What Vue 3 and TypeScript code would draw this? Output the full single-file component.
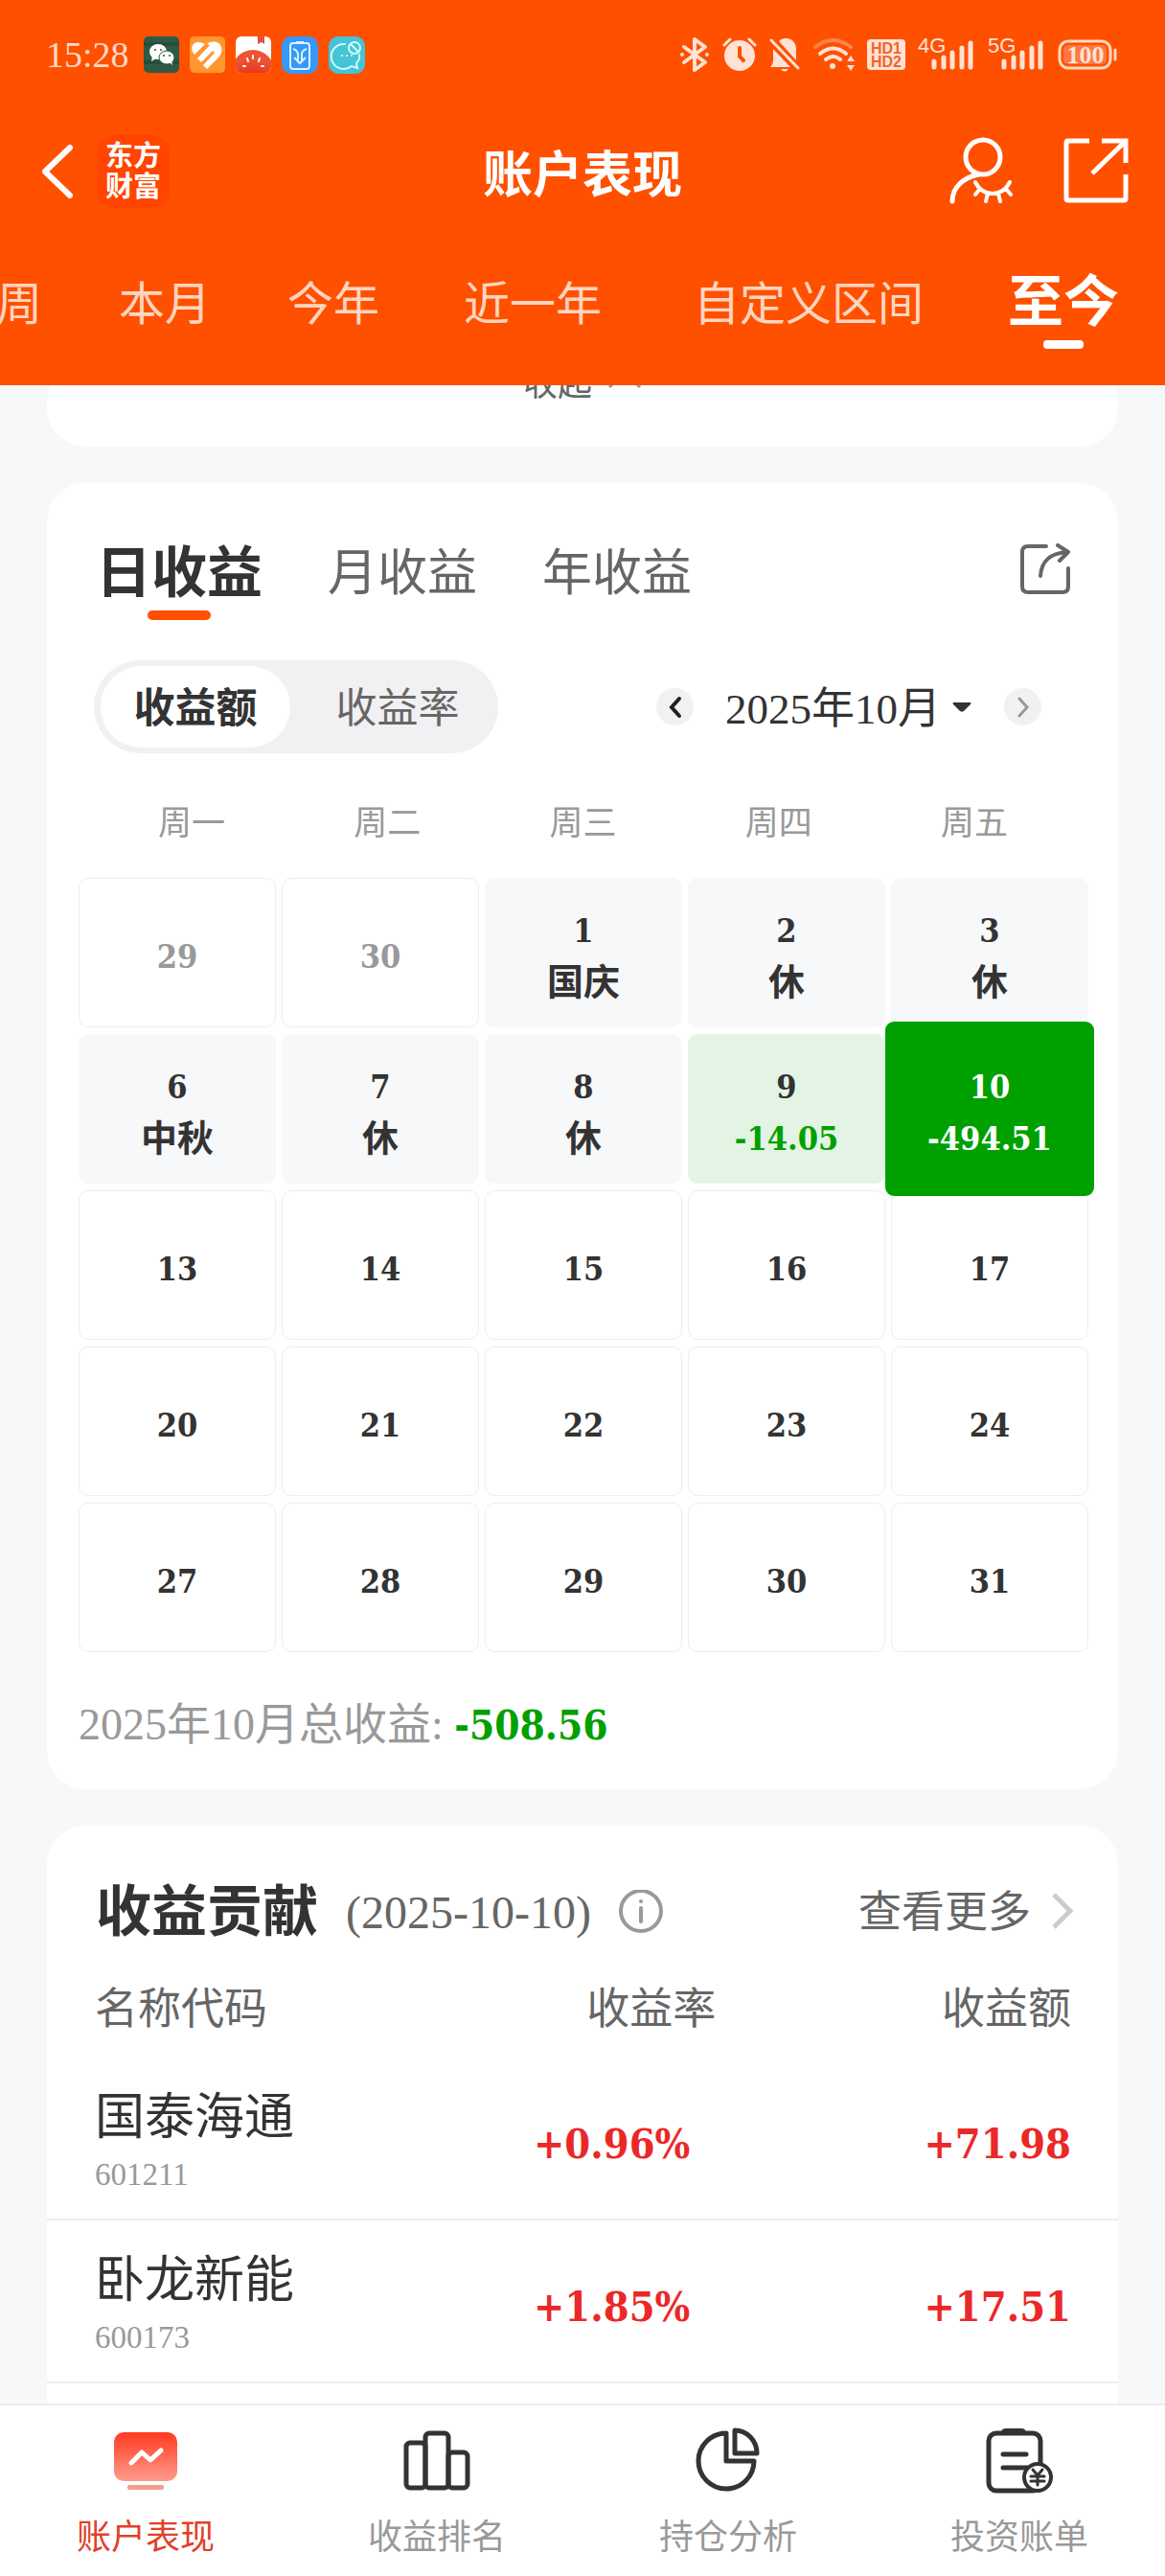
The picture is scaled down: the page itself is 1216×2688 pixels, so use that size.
<script setup lang="ts">
import { ref } from 'vue'

interface Range { label: string; wide?: boolean }
interface Day { id: number; day: number; note?: string; tone?: 'muted' | 'rest' | 'loss' | 'active' }
interface Holding { name: string; code: string; rate: string; amount: string }

const ranges: Range[] = [
  { label: '周' },
  { label: '本月' },
  { label: '今年' },
  { label: '近一年', wide: true },
  { label: '自定义区间', wide: true },
  { label: '至今' },
]
const activeRange = ref('至今')

const periods = ['日收益', '月收益', '年收益']
const activePeriod = ref('日收益')

const modes = ['收益额', '收益率']
const activeMode = ref('收益额')

const month = ref('2025年10月')
const weekdays = ['周一', '周二', '周三', '周四', '周五']

const special: Record<number, Pick<Day, 'note' | 'tone'>> = {
  1: { note: '国庆', tone: 'rest' },
  2: { note: '休', tone: 'rest' },
  3: { note: '休', tone: 'rest' },
  6: { note: '中秋', tone: 'rest' },
  7: { note: '休', tone: 'rest' },
  8: { note: '休', tone: 'rest' },
  9: { note: '-14.05', tone: 'loss' },
  10: { note: '-494.51', tone: 'active' },
}
const monthDays = [1, 2, 3, 6, 7, 8, 9, 10, 13, 14, 15, 16, 17, 20, 21, 22, 23, 24, 27, 28, 29, 30, 31]
const days: Day[] = [
  { id: -2, day: 29, tone: 'muted' },
  { id: -1, day: 30, tone: 'muted' },
  ...monthDays.map((d) => ({ id: d, day: d, ...special[d] })),
]

const holdings: Holding[] = [
  { name: '国泰海通', code: '601211', rate: '+0.96%', amount: '+71.98' },
  { name: '卧龙新能', code: '600173', rate: '+1.85%', amount: '+17.51' },
]

const isNumeric = (note: string) => note.startsWith('-') || note.startsWith('+')
</script>

<template>
  <div class="page">
    <header class="top">
      <div class="status">
        <div class="status-left">
          <span class="clock">15:28</span>
          <svg width="37" height="38" viewBox="0 0 37 38">
            <rect width="37" height="38" rx="5" fill="#2f5a45" />
            <path d="M0 8h37M0 27h37" stroke="#274c3b" stroke-width="4" />
            <ellipse cx="15" cy="16" rx="9" ry="8" fill="#fff" />
            <path d="M9 21l-1 5 5-3z" fill="#fff" />
            <ellipse cx="24" cy="22" rx="8" ry="7" fill="#fff" stroke="#2f5a45" stroke-width="1" />
            <path d="M27 27l3 3-1-5z" fill="#fff" />
            <circle cx="12" cy="14" r="1" fill="#2f5a45" /><circle cx="18" cy="14" r="1" fill="#2f5a45" />
            <circle cx="21" cy="20" r="1" fill="#2f5a45" /><circle cx="27" cy="20" r="1" fill="#2f5a45" />
          </svg>
          <svg width="37" height="38" viewBox="0 0 37 38">
            <rect width="37" height="38" rx="5" fill="#ff9630" />
            <path d="M18 8c5-4 13-3 15 3 1 4 0 8-3 11L18 34l-4-4 12-13-2-2L12 27l-4-4 13-14z" fill="#fff" />
            <path d="M16 8L5 19C0 13 2 6 9 6c3 0 5 1 7 2z" fill="#fff" />
            <path d="M19 9L8 21" stroke="#ff9630" stroke-width="2" />
          </svg>
          <svg width="37" height="38" viewBox="0 0 37 38">
            <defs>
              <radialGradient id="melon" cx="50%" cy="100%" r="80%">
                <stop offset="0" stop-color="#d41208" /><stop offset="1" stop-color="#ee5434" />
              </radialGradient>
              <clipPath id="melon-clip"><rect width="37" height="38" rx="6" /></clipPath>
            </defs>
            <g clip-path="url(#melon-clip)">
              <rect width="37" height="38" fill="#fff" />
              <path d="M23 0h7v8l-3-2-4 2z" fill="#e65038" />
              <circle cx="18" cy="36" r="22" fill="url(#melon)" />
              <path d="M18 20v3M12 23l1 3M25 23l-1 3M8 31l2 0M29 31l-2 0" stroke="#fff" stroke-width="2" stroke-linecap="round" />
            </g>
          </svg>
          <svg width="38" height="39" viewBox="0 0 38 39">
            <rect width="38" height="39" rx="10" fill="#3797fa" />
            <rect x="9" y="7" width="20" height="27" rx="3" fill="none" stroke="#d8f4ff" stroke-width="2" />
            <path d="M15 6h8M12 13q6 2 5 8v6M26 13q-6 2-5 8v6M13 22l6 6 6-6" fill="none" stroke="#d8f4ff" stroke-width="2" />
          </svg>
          <svg width="38" height="39" viewBox="0 0 38 39">
            <rect width="38" height="39" rx="10" fill="#45c4d4" />
            <path d="M17 8A13 13 0 1 0 24 31l6 2-1-5q4-4 3-9" fill="none" stroke="#cdfcff" stroke-width="2" stroke-linecap="round" />
            <circle cx="27" cy="12" r="6" fill="none" stroke="#cdfcff" stroke-width="2" />
            <path d="M23 8l8 8" stroke="#cdfcff" stroke-width="2" />
            <circle cx="14" cy="20" r="1" fill="#fff" /><circle cx="19" cy="20" r="1" fill="#fff" /><circle cx="24" cy="20" r="1" fill="#fff" />
          </svg>
        </div>
        <div class="status-right">
          <svg width="32" height="40" viewBox="0 0 32 40">
            <path d="M5 12l22 16-11 8V4l11 8L5 28" fill="none" stroke="#ffe2d4" stroke-width="4" stroke-linejoin="round" stroke-linecap="round" />
            <circle cx="3" cy="20" r="2" fill="#ffe2d4" /><circle cx="29" cy="20" r="2" fill="#ffe2d4" />
          </svg>
          <svg width="36" height="40" viewBox="0 0 36 40">
            <circle cx="18" cy="21" r="16" fill="#ffe2d4" />
            <path d="M2 10l6-6M34 10l-6-6" stroke="#ffe2d4" stroke-width="3" stroke-linecap="round" />
            <path d="M18 13v9l4 4" fill="none" stroke="#ff5000" stroke-width="4" stroke-linecap="round" />
          </svg>
          <svg width="32" height="40" viewBox="0 0 32 40">
            <path d="M11 5c8-5 17 0 17 9v12L10 6zM4 14l18 19H1c3-3 3-6 3-10zM12 35h8q-4 5-8 0z" fill="#ffe2d4" />
            <path d="M2 5l28 29" stroke="#ffe2d4" stroke-width="3" stroke-linecap="round" />
          </svg>
          <svg width="44" height="40" viewBox="0 0 44 40">
            <g fill="none" stroke="#ffe2d4" stroke-width="4" stroke-linecap="round">
              <path d="M3 12q18-14 37 0" opacity="0.35" /><path d="M8 19q14-11 27 0" /><path d="M14 25q8-6 15 0" />
            </g>
            <circle cx="21" cy="32" r="3" fill="#ffe2d4" />
            <path d="M40 21l4 6h-8zM40 37l4-6h-8z" fill="#ffe2d4" />
          </svg>
          <svg width="40" height="40" viewBox="0 0 40 40">
            <rect y="4" width="40" height="32" rx="4" fill="#ffe2d4" />
            <text x="20" y="19" class="glyph hd">HD1</text>
            <text x="20" y="33" class="glyph hd">HD2</text>
          </svg>
          <svg v-for="net in ['4G', '5G']" :key="net" width="60" height="40" viewBox="0 0 60 40">
            <text x="0" y="18" class="net">{{ net }}</text>
            <path d="M17 33v-6M27 33V23M36 33V18M46 33V13M55 33V8" stroke="#ffe2d4" stroke-width="5" stroke-linecap="round" />
          </svg>
          <svg width="62" height="40" viewBox="0 0 62 40">
            <rect x="2" y="6" width="53" height="28" rx="9" fill="none" stroke="#ffd9bd" stroke-width="3" />
            <rect x="6" y="10" width="45" height="20" rx="5" fill="#ff7840" />
            <path d="M60 15v10" stroke="#ffd9bd" stroke-width="3" stroke-linecap="round" />
            <text x="29" y="29" class="glyph level">100</text>
          </svg>
        </div>
      </div>

      <div class="title-bar">
        <div class="side">
          <button class="icon-btn" aria-label="返回">
            <svg width="40" height="64" viewBox="0 0 40 64">
              <path d="M36 7L10 32l26 25" fill="none" stroke="#fff" stroke-width="6" stroke-linejoin="round" stroke-linecap="round" />
            </svg>
          </button>
          <a href="#" class="brand"><span>东方</span><span>财富</span></a>
        </div>
        <h1>账户表现</h1>
        <div class="side end">
          <button class="icon-btn" aria-label="隐私">
            <svg width="70" height="72" viewBox="0 0 70 72">
              <g fill="none" stroke="#fff" stroke-width="5" stroke-linecap="round">
                <circle cx="35" cy="21" r="18" />
                <path d="M31 39C15 42 3 52 3 67" />
                <path d="M27 47q6 12 18 12t18-12M32 54l-5 6M40 59l-2 8M51 59l2 8M59 54l5 6" stroke-width="4" />
              </g>
            </svg>
          </button>
          <button class="icon-btn" aria-label="分享">
            <svg width="70" height="72" viewBox="0 0 70 72">
              <path d="M28 4H6Q4 4 4 6V64q0 2 2 2H64q2 0 2-2V39M41 4H66V27M31 38L65 5" fill="none" stroke="#fff" stroke-width="5" />
            </svg>
          </button>
        </div>
      </div>

      <nav class="ranges">
        <button
          v-for="r in ranges" :key="r.label"
          :class="{ wide: r.wide, on: r.label === activeRange }"
          @click="activeRange = r.label"
        >{{ r.label }}</button>
      </nav>
    </header>

    <main class="content">
      <section class="card summary">
        <button class="collapse">
          收起
          <svg width="36" height="20" viewBox="0 0 36 20"><path d="M2 18L18 3l16 15" fill="none" stroke="#999" stroke-width="3" /></svg>
        </button>
      </section>

      <section class="card calendar-card">
        <div class="row">
          <div class="periods">
            <button v-for="p in periods" :key="p" :class="{ on: p === activePeriod }" @click="activePeriod = p">{{ p }}</button>
          </div>
          <button class="icon-btn share" aria-label="分享日历">
            <svg width="58" height="56" viewBox="0 0 58 56">
              <path d="M31 3H12q-6 0-6 6V45q0 6 6 6H48q6 0 6-6V26M25 34C26 18 35 10 54 9M43 2l11 7-9 9" fill="none" stroke="#666" stroke-width="4" stroke-linecap="round" stroke-linejoin="round" />
            </svg>
          </button>
        </div>

        <div class="row controls">
          <div class="modes">
            <button v-for="m in modes" :key="m" :class="{ on: m === activeMode }" @click="activeMode = m">{{ m }}</button>
          </div>
          <div class="month-nav">
            <button class="round" aria-label="上个月">
              <svg width="14" height="24" viewBox="0 0 14 24"><path d="M11 3L3 12l8 9" fill="none" stroke="#222" stroke-width="4" stroke-linecap="round" /></svg>
            </button>
            <label class="month">
              <select v-model="month" aria-label="月份"><option>2025年10月</option></select>
              <svg width="22" height="12" viewBox="0 0 22 12"><path d="M2 1h18q1 1 0 2l-7 7q-2 1-4 0L2 3q-1-1 0-2z" fill="#333" /></svg>
            </label>
            <button class="round" aria-label="下个月">
              <svg width="14" height="24" viewBox="0 0 14 24"><path d="M3 3l8 9-8 9" fill="none" stroke="#999" stroke-width="3" stroke-linecap="round" /></svg>
            </button>
          </div>
        </div>

        <div class="weekdays"><span v-for="w in weekdays" :key="w">{{ w }}</span></div>
        <div class="days">
          <button v-for="d in days" :key="d.id" class="day" :class="d.tone">
            <span class="num">{{ d.day }}</span>
            <span v-if="d.note" class="note" :class="{ num: isNumeric(d.note) }">{{ d.note }}</span>
          </button>
        </div>

        <p class="total">2025年10月总收益: <strong>-508.56</strong></p>
      </section>

      <section class="card contribution">
        <div class="row head">
          <div class="heading">
            <h2>收益贡献</h2>
            <span class="date">(2025-10-10)</span>
            <button class="icon-btn" aria-label="说明">
              <svg width="48" height="48" viewBox="0 0 48 48">
                <circle cx="24" cy="22" r="21" fill="none" stroke="#999" stroke-width="4" />
                <circle cx="24" cy="12" r="2" fill="#999" />
                <path d="M24 19v14" stroke="#999" stroke-width="4" stroke-linecap="round" />
              </svg>
            </button>
          </div>
          <a href="#" class="more">
            查看更多
            <svg width="24" height="44" viewBox="0 0 24 44"><path d="M3 3l17 17L3 37" fill="none" stroke="#ccc" stroke-width="5" /></svg>
          </a>
        </div>
        <table>
          <thead>
            <tr><th scope="col">名称代码</th><th scope="col">收益率</th><th scope="col">收益额</th></tr>
          </thead>
          <tbody>
            <tr v-for="h in holdings" :key="h.code">
              <td><div class="name">{{ h.name }}</div><div class="code">{{ h.code }}</div></td>
              <td class="value">{{ h.rate }}</td>
              <td class="value">{{ h.amount }}</td>
            </tr>
          </tbody>
        </table>
      </section>
    </main>

    <nav class="bottom">
      <a href="#" class="on">
        <svg width="72" height="72" viewBox="0 0 72 72">
          <defs>
            <linearGradient id="screen" x1="0" y1="0" x2="0" y2="1">
              <stop offset="0" stop-color="#ff3a20" /><stop offset="1" stop-color="#ff9c8d" />
            </linearGradient>
          </defs>
          <rect x="3" y="6" width="66" height="51" rx="10" fill="url(#screen)" />
          <rect x="17" y="61" width="38" height="5" rx="2" fill="#f59b8e" />
          <path d="M21 38l11-11 9 8 11-10" fill="none" stroke="#fff" stroke-width="5" stroke-linecap="round" stroke-linejoin="round" />
        </svg>
        账户表现
      </a>
      <a href="#">
        <svg width="72" height="72" viewBox="0 0 72 72">
          <g fill="none" stroke="#333" stroke-width="5">
            <rect x="4" y="17" width="20" height="47" rx="4" /><rect x="24" y="7" width="24" height="57" rx="4" /><rect x="48" y="27" width="20" height="37" rx="4" />
          </g>
        </svg>
        收益排名
      </a>
      <a href="#">
        <svg width="72" height="72" viewBox="0 0 72 72">
          <path d="M34 7A29 29 0 1 0 63 36H34ZM43 4A23 24 0 0 1 66 28H43Z" fill="none" stroke="#333" stroke-width="5" stroke-linejoin="round" />
        </svg>
        持仓分析
      </a>
      <a href="#">
        <svg width="72" height="72" viewBox="0 0 72 72">
          <rect x="4" y="7" width="54" height="60" rx="8" fill="none" stroke="#333" stroke-width="5" />
          <path d="M17 7q0-5 5-5h16q5 0 5 5z" fill="#333" />
          <path d="M19 29h24M19 43h26" stroke="#333" stroke-width="5" stroke-linecap="round" />
          <circle cx="55" cy="53" r="14" fill="#fff" stroke="#333" stroke-width="4" />
          <path d="M50 45l5 6 5-6M55 51v10M48 52h14M48 57h14" fill="none" stroke="#333" stroke-width="3" stroke-linecap="round" />
        </svg>
        投资账单
      </a>
    </nav>
  </div>
</template>

<style>
body {
  margin: 0;
  background: #f7f8fa;
}
</style>

<style scoped>
.page {
  display: flex;
  flex-direction: column;
  min-height: 100vh;
  background: #f7f8fa;
  color: #333;
  font-family: "Liberation Serif", "Noto Sans CJK SC", sans-serif;
}
* {
  box-sizing: border-box;
}
button,
select {
  border: 0;
  margin: 0;
  padding: 0;
  background: none;
  color: inherit;
  font: inherit;
}
a {
  color: inherit;
  text-decoration: none;
}
svg {
  display: block;
  flex: none;
}
h1,
h2,
p {
  margin: 0;
}

.top {
  background: #ff5000;
  padding-top: 37px;
  color: #fff;
  overflow: hidden;
}
.status {
  display: flex;
  justify-content: space-between;
  align-items: center;
  height: 40px;
  padding: 0 50px 0 48px;
}
.status-left {
  display: flex;
  align-items: center;
  gap: 11px;
}
.clock {
  margin-right: 4px;
  font-size: 38px;
  line-height: 40px;
  color: #ffd9c4;
}
.status-right {
  display: flex;
  align-items: center;
  gap: 13px;
}
.glyph {
  text-anchor: middle;
  font-weight: 700;
}
.hd {
  font-family: "Liberation Sans", sans-serif;
  font-size: 16px;
  fill: #f0652c;
}
.net {
  font-family: "Liberation Sans", sans-serif;
  font-size: 22px;
  fill: #ffe2d4;
}
.level {
  font-size: 26px;
  fill: #ffe2d4;
}
.title-bar {
  display: flex;
  align-items: center;
  height: 80px;
  margin-top: 62px;
  padding: 0 37px;
}
.title-bar h1 {
  padding-top: 10px;
  font-size: 52px;
  line-height: 70px;
  font-weight: 700;
}
.side {
  display: flex;
  flex: 1;
  align-items: center;
  gap: 24px;
}
.side.end {
  justify-content: flex-end;
  gap: 48px;
}
.brand {
  display: flex;
  flex-direction: column;
  align-items: center;
  justify-content: center;
  width: 76px;
  height: 76px;
  border-radius: 18px;
  background: #ff4500;
  font-size: 29px;
  line-height: 32px;
  font-weight: 700;
}
.ranges {
  display: flex;
  gap: 80px;
  height: 116px;
  margin: 67px 0 0 -4px;
}
.ranges button {
  flex: none;
  height: 64px;
  font-size: 48px;
  line-height: 64px;
  color: #ffd5bf;
}
.ranges .wide {
  padding: 0 8px;
}
.ranges .on {
  display: flex;
  flex-direction: column;
  align-items: center;
  font-size: 58px;
  line-height: 60px;
  font-weight: 700;
  color: #fff;
}
.ranges .on::after {
  content: "";
  flex: none;
  width: 42px;
  height: 9px;
  margin-top: 9px;
  border-radius: 4px;
  background: #fff;
}

.content {
  display: flex;
  flex-direction: column;
  flex: 1;
  gap: 38px;
  padding: 0 49px;
  overflow: hidden;
}
.card {
  border-radius: 40px;
  background: #fff;
}
.row {
  display: flex;
  justify-content: space-between;
  align-items: flex-start;
}
.summary {
  margin-top: -24px;
  padding-bottom: 42px;
}
.collapse {
  display: flex;
  justify-content: center;
  align-items: flex-start;
  gap: 16px;
  width: 100%;
  font-size: 36px;
  line-height: 46px;
  color: #666;
}
.collapse svg {
  margin-top: 8px;
}

.calendar-card {
  padding: 63px 48px 37px 49px;
}
.calendar-card > .row:first-child {
  padding-left: 2px;
}
.periods {
  display: flex;
  gap: 68px;
}
.periods button {
  height: 80px;
  padding-bottom: 16px;
  font-size: 52px;
  line-height: 64px;
  color: #666;
}
.periods .on {
  display: flex;
  flex-direction: column;
  align-items: center;
  padding-bottom: 0;
  font-size: 58px;
  font-weight: 700;
  color: #333;
}
.periods .on::after {
  content: "";
  width: 66px;
  height: 10px;
  margin-top: 6px;
  border-radius: 5px;
  background: #ff5000;
}
.controls {
  align-items: center;
  margin-top: 42px;
}
.modes {
  display: flex;
  padding: 6px 7px;
  border-radius: 49px;
  background: #f1f1f3;
}
.modes button {
  width: 198px;
  height: 85px;
  padding-top: 4px;
  border-radius: 43px;
  font-size: 43px;
  line-height: 80px;
  color: #666;
}
.modes button + button {
  width: 210px;
  padding-left: 14px;
}
.modes .on {
  background: #fff;
  color: #333;
  font-weight: 700;
}
.month-nav {
  display: flex;
  align-items: center;
  gap: 33px;
  margin-right: 32px;
}
.round {
  display: flex;
  justify-content: center;
  align-items: center;
  width: 39px;
  height: 39px;
  border-radius: 50%;
  background: #f1f1f3;
}
.month {
  display: flex;
  align-items: center;
  gap: 10px;
}
.month select {
  appearance: none;
  padding-top: 4px;
  font-size: 45px;
  line-height: 64px;
}
.weekdays {
  display: grid;
  grid-template-columns: repeat(5, 1fr);
  margin-top: 54px;
  text-align: center;
  font-size: 35px;
  line-height: 40px;
  color: #999;
}
.days {
  display: grid;
  grid-template-columns: repeat(5, 1fr);
  gap: 7px 6px;
  margin: 36px -17px 0 -16px;
}
.day {
  position: relative;
  display: flex;
  flex-direction: column;
  align-items: center;
  justify-content: center;
  height: 156px;
  padding-top: 8px;
  border: 1px solid #eee;
  border-radius: 10px;
  font-size: 38px;
  line-height: 54px;
  font-weight: 700;
}
.num,
.value,
.total strong {
  font-family: "DejaVu Serif Condensed", "DejaVu Serif", serif;
  font-weight: 700;
}
.day .num {
  position: relative;
  font-size: 34px;
}
.muted {
  color: #999;
}
.rest {
  border-color: #f7f8fa;
  background: #f7f8fa;
}
.loss {
  border-color: #e3f4e4;
  background: #e3f4e4;
}
.loss .note {
  color: #00a000;
}
.active {
  z-index: 1;
  border-color: #00a000;
  color: #fff;
}
.active::before {
  content: "";
  position: absolute;
  inset: -14px -7px;
  border-radius: 9px;
  background: #00a000;
}
.total {
  margin: 46px 0 0 -16px;
  font-size: 46px;
  line-height: 60px;
  color: #999;
}
.total strong {
  font-size: 42px;
  line-height: 58px;
  color: #00a000;
}

.contribution {
  flex: 1;
  padding-top: 59px;
  border-radius: 40px 40px 0 0;
}
.head {
  align-items: center;
  padding: 0 46px 0 51px;
}
.heading {
  display: flex;
  align-items: center;
}
h2 {
  font-size: 58px;
  line-height: 64px;
  font-weight: 700;
}
.date {
  margin: 0 28px 0 29px;
  font-size: 48px;
  line-height: 64px;
  color: #666;
}
.more {
  display: flex;
  align-items: center;
  gap: 21px;
  font-size: 45px;
  line-height: 64px;
  color: #666;
}
table {
  width: 100%;
  margin-top: 19px;
  border-collapse: collapse;
  table-layout: fixed;
}
th {
  height: 100px;
  padding: 0;
  font-size: 45px;
  line-height: 60px;
  font-weight: 400;
  color: #666;
  text-align: right;
}
th:first-child,
td:first-child {
  width: 32%;
  padding-left: 50px;
  text-align: left;
}
th:last-child,
td:last-child {
  padding-right: 49px;
}
th:nth-child(2) {
  width: 31%;
  padding-right: 6px;
}
td {
  padding: 31px 0 19px;
  border-bottom: 2px solid #eee;
}
.value {
  padding-right: 33px;
  font-size: 43px;
  line-height: 60px;
  color: #eb2828;
  text-align: right;
}
.name {
  font-size: 52px;
  line-height: 64px;
}
.code {
  font-size: 33px;
  line-height: 54px;
  color: #999;
}

.bottom {
  display: flex;
  padding: 22px 0 18px;
  border-top: 2px solid #ededef;
  background: #fff;
}
.bottom a {
  display: flex;
  flex: 1;
  flex-direction: column;
  align-items: center;
  gap: 22px;
  font-size: 36px;
  line-height: 44px;
  color: #999;
}
.bottom .on {
  color: #e2402a;
}
</style>
